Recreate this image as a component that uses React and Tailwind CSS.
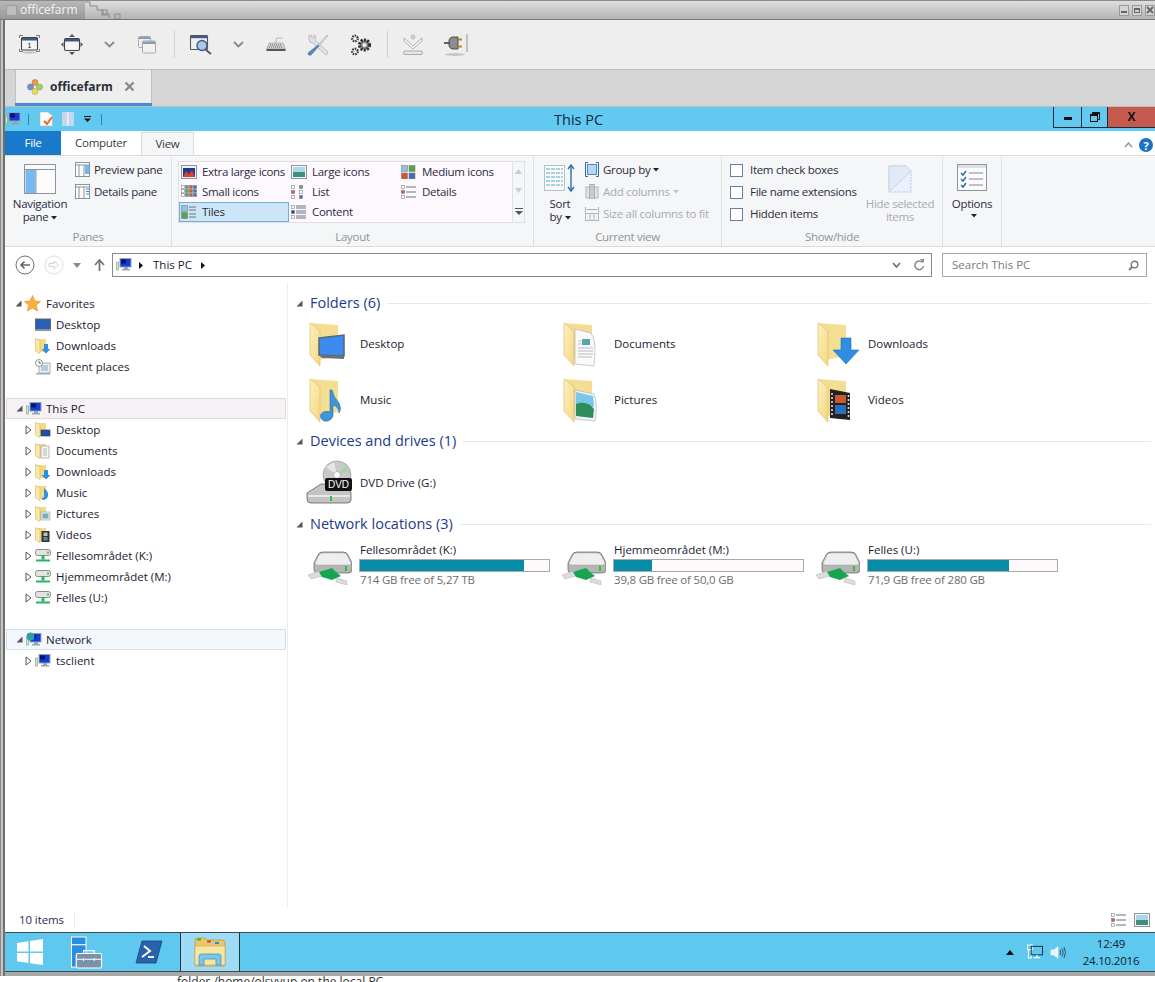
import React from "react";

const FONT = { fontFamily: '"Open Sans","Noto Sans",sans-serif' };

function FolderBig({ children, id }) {
  return (
    <svg width="48" height="48" viewBox="0 0 48 48" className="shrink-0">
      <defs>
        <linearGradient id={`leaf-${id}`} x1="0" y1="0" x2="1" y2="1">
          <stop offset="0" stopColor="#fdf1c2" />
          <stop offset="1" stopColor="#f5d77e" />
        </linearGradient>
      </defs>
      <path d="M4 3 L32 5 L32 36 L12 40Z" fill="#f4de93" />
      <path d="M4 3 L14 11 L14 46 L4 35Z" fill={`url(#leaf-${id})`} stroke="#dcc070" strokeWidth="0.7" />
      {children}
    </svg>
  );
}
function FolderSmall({ children }) {
  return (
    <svg width="16" height="16" viewBox="0 0 16 16" className="shrink-0">
      <path d="M1 1 L11 1 L11 14 L3 14Z" fill="#f3da86" />
      <path d="M0.5 0.5 L5 2.5 L5 15.5 L0.5 13Z" fill="#fbe9aa" stroke="#d5b65e" strokeWidth="0.6" />
      {children}
    </svg>
  );
}
function Monitor({ globe }) {
  return (
    <svg width="16" height="16" viewBox="0 0 16 16" className="shrink-0">
      <rect x="0.5" y="5" width="2" height="8" fill="#dcdcdc" stroke="#6fae6f" strokeWidth="0.6" />
      <rect x="4" y="1.5" width="11" height="8.5" fill="#0f3fd8" stroke="#9aa3ad" />
      <rect x="5" y="2.5" width="5" height="4" fill="#07156b" />
      <path d="M8 10 h4 v2 h2 v1.5 h-8 v-1.5 h2z" fill="#9aa3ad" />
      {globe && <circle cx="4.5" cy="4.5" r="4" fill="#2e9ad8" />}
      {globe && <path d="M2 3 L5 1.5 L7 4 L4 7Z" fill="#39a845" />}
    </svg>
  );
}
function NetDriveSmall() {
  return (
    <svg width="16" height="16" viewBox="0 0 16 16" className="shrink-0">
      <rect x="0.5" y="1.5" width="15" height="6" rx="2" fill="#e2e2e2" stroke="#8b8b8b" />
      <rect x="12" y="3.5" width="2" height="2" fill="#67b94a" />
      <rect x="6.5" y="7.5" width="3" height="4" fill="#26b36b" />
      <rect x="1" y="11.5" width="14" height="2" fill="#26b36b" />
    </svg>
  );
}
function NetDriveBig() {
  return (
    <svg width="44" height="34" viewBox="0 0 44 34" className="shrink-0">
      <path d="M6 12 L10 4 Q11 1 15 1 L35 1 Q39 1 40 4 L44 12 L44 19 Q44 22 40 22 L10 22 Q6 22 6 19Z" fill="#b5b5b5" stroke="#5f5f5f" strokeWidth="0.7" />
      <path d="M7 12 L11 4 Q12 2 15 2 L35 2 Q38 2 39 4 L43 12 Q43 14 40 14 L10 14 Q7 14 7 12Z" fill="#eeeeee" stroke="#999" strokeWidth="0.4" />
      <rect x="37" y="15" width="2" height="5" fill="#35c032" />
      <path d="M0 24 L11 20 L14 25 L3 28Z" fill="#dcdcdc" stroke="#a5a5a5" strokeWidth="0.4" />
      <path d="M11 21 L24 17 L28 21 L33 25 L24 29 L14 26Z" fill="#18a552" />
      <path d="M29 27 L39 30 L39 34 L28 31Z" fill="#dcdcdc" stroke="#a5a5a5" strokeWidth="0.4" />
    </svg>
  );
}
function DvdBig() {
  return (
    <svg width="48" height="48" viewBox="0 0 48 48" className="shrink-0">
      <circle cx="32" cy="16" r="14" fill="#c9c9c9" stroke="#8f8f8f" strokeWidth="0.6" />
      <path d="M21 8 L32 16 L29 3Z" fill="#e6e6e6" />
      <path d="M32 16 L43 12 L41 6Z" fill="#a6d6a0" />
      <circle cx="32" cy="16" r="3.5" fill="#fafafa" stroke="#888" strokeWidth="0.5" />
      <path d="M2 34 L16 25 L44 25 L46 34 L46 41 Q46 44 42 44 L6 44 Q2 44 2 40Z" fill="#c4c4c4" stroke="#5f5f5f" strokeWidth="0.8" />
      <path d="M3 37 H45" stroke="#f4f4f4" strokeWidth="1.5" />
      <rect x="25" y="37" width="2" height="5" fill="#38c038" />
      <rect x="20" y="19" width="27" height="13" rx="2" fill="#111" />
      <text x="33.5" y="29" textAnchor="middle" fontSize="10" fontFamily="Liberation Sans" fill="#fff">DVD</text>
    </svg>
  );
}

const overlays = {
  desktop: (
    <>
      <path d="M13 18 L38 15 L38 36 L13 35Z" fill="#3d8af0" stroke="#5a6670" strokeWidth="1.5" />
      <path d="M13 35 L38 36 L38 39 L16 38Z" fill="#677179" />
    </>
  ),
  documents: (
    <>
      <path d="M15 9 L31 13 Q37 20 34 46 L15 44Z" fill="#fafafa" stroke="#aeb6bd" strokeWidth="0.7" />
      <rect x="22" y="19" width="8" height="6" fill="#5fa5a8" />
      <path d="M18 21 H21 M18 24 H21 M18 28 H33 M18 31 H33 M18 34 H33 M18 37 H32" stroke="#b5bcc4" strokeWidth="1" />
    </>
  ),
  downloads: (
    <path d="M27 18 H37 V30 H45 L32 44 L19 30 H27Z" fill="#2f8ee0" stroke="#1e6fb8" strokeWidth="0.6" />
  ),
  music: (
    <path d="M24 14 L26 14 Q28 22 33 27 Q36 33 33 37 Q33 31 27 29 L27 40 Q25 46 18 45 Q13 42 15 38 Q18 34 24 36Z" fill="#3f95d8" stroke="#246fa8" strokeWidth="0.6" />
  ),
  pictures: (
    <>
      <path d="M15 14 L34 18 Q38 28 35 45 L15 43Z" fill="#eef4f5" stroke="#aeb6bd" strokeWidth="0.7" />
      <path d="M16 16 L33 20 L34 31 L16 29Z" fill="#7cc6e8" />
      <path d="M16 28 Q27 24 34 33 L33 42 L16 40Z" fill="#2f8d5c" />
    </>
  ),
  videos: (
    <>
      <path d="M16 13 L36 17 L36 44 L16 42Z" fill="#222" />
      <rect x="21" y="19" width="11" height="8" fill="#c85a2e" />
      <rect x="21" y="29" width="11" height="9" fill="#2a70b8" />
      <path d="M18 17 V41 M34.5 19 V42" stroke="#ddd" strokeWidth="1.6" strokeDasharray="2 2" />
    </>
  ),
};

const smallOverlay = {
  desktop: <rect x="6" y="8" width="9" height="6" fill="#1b4fa8" stroke="#444" strokeWidth="0.7" />,
  documents: <path d="M6 3 H14 V15 H6Z M8 6 H12 M8 8 H12 M8 10 H12 M8 12 H12" fill="#f6f6f6" stroke="#8b95a0" strokeWidth="0.6" />,
  downloads: <path d="M9 6 H13 V11 H15.5 L11 15.5 L6.5 11 H9Z" fill="#2f8ee0" />,
  music: <path d="M9 3 Q14 7 13 11 Q12 15 7 15 L7 13 Q10 13 9 10Z" fill="#2f8ee0" />,
  pictures: (
    <>
      <rect x="6" y="6" width="9" height="8" fill="#eee" stroke="#888" strokeWidth="0.5" />
      <rect x="7.5" y="7.5" width="6" height="5" fill="#6cb4b5" />
    </>
  ),
  videos: (
    <>
      <rect x="6.5" y="4" width="8" height="11" fill="#333" />
      <rect x="8.5" y="5.5" width="4" height="3.5" fill="#b9c7b0" />
      <rect x="8.5" y="10" width="4" height="3.5" fill="#5f88a8" />
    </>
  ),
};

function Tri({ open }) {
  return open ? (
    <svg width="7" height="7" viewBox="0 0 7 7" className="shrink-0">
      <path d="M6.5 0.5 V6.5 H0.5Z" fill="#555" />
    </svg>
  ) : (
    <svg width="7" height="10" viewBox="0 0 7 10" className="shrink-0">
      <path d="M1 1 L6 5 L1 9Z" fill="#fff" stroke="#555" />
    </svg>
  );
}

function NavHead({ icon, label, box }) {
  return (
    <div className={`ml-[1px] mr-[1px] flex h-[21px] items-center border pl-[9px] ${box}`}>
      <Tri open />
      <span className="ml-[2px] flex w-[18px] justify-center">{icon}</span>
      <span className="ml-[3px] text-[#1a1a30]">{label}</span>
    </div>
  );
}
function NavItem({ icon, label, arrow }) {
  return (
    <div className="flex h-[21px] items-center pl-[20px]">
      <span className="flex w-[10px]">{arrow && <Tri />}</span>
      {icon}
      <span className="ml-[5px] text-[#1a1a30]">{label}</span>
    </div>
  );
}

function Section({ label, className }) {
  return (
    <div className={`flex h-[20px] items-center ${className}`}>
      <Tri open />
      <span className="ml-[7px] text-[14.5px] text-[#1e3a8a]">{label}</span>
      <span className="ml-[7px] h-px flex-1 bg-[#dfe9f2]" />
    </div>
  );
}

function FolderTile({ id, label }) {
  return (
    <div className="flex h-[56px] items-center">
      <span className="ml-[7px] flex w-[54px]">
        <FolderBig id={id}>{overlays[id]}</FolderBig>
      </span>
      <span className="text-[#1a1a30]">{label}</span>
    </div>
  );
}

function DriveTile({ name, free, pct }) {
  return (
    <div className="flex h-[50px] items-center">
      <span className="ml-[9px] flex w-[52px] pt-[8px]">
        <NetDriveBig />
      </span>
      <div className="flex w-[190px] flex-col">
        <span className="h-[17px] leading-[16px] text-[#1a1a30]">{name}</span>
        <div className="-ml-px h-[13px] border border-[#a9a9a9] bg-[#fdf9fd]">
          <div className="h-full bg-[#078ba6]" style={{ width: `${pct}%` }} />
        </div>
        <span className="h-[15px] whitespace-nowrap leading-[16px] tracking-[-0.2px] text-[#6d6d6d]">{free}</span>
      </div>
    </div>
  );
}

function LayoutIcon({ kind }) {
  const grid = (cols, rows, sz, gap, fills) => {
    const out = [];
    let k = 0;
    for (let r = 0; r < rows; r++)
      for (let c = 0; c < cols; c++) {
        out.push(
          <rect key={k} x={0.5 + c * (sz + gap)} y={0.5 + r * (sz + gap)} width={sz} height={sz} fill={fills[k % fills.length]} stroke="#7b8590" strokeWidth="0.6" />
        );
        k++;
      }
    return out;
  };
  const lines = (ys, x1, x2) => ys.map((y) => <path key={y} d={`M${x1} ${y} H${x2}`} stroke="#69727e" strokeWidth="1" />);
  return (
    <svg width="16" height="14" viewBox="0 0 16 14" className="shrink-0">
      {kind === "xl" && (
        <>
          <rect x="0.5" y="0.5" width="15" height="13" fill="#eef2f6" stroke="#8d96a0" />
          <rect x="2" y="3" width="12" height="9" fill="#1e3a8a" />
          <path d="M2 12 L5 6 L8 9 L11 5 L14 12Z" fill="#d8432b" />
        </>
      )}
      {kind === "l" && (
        <>
          <rect x="0.5" y="0.5" width="15" height="13" fill="#f4f6f8" stroke="#8d96a0" />
          <rect x="2" y="2" width="12" height="5" fill="#a9d8e8" />
          <rect x="2" y="7" width="12" height="5" fill="#3f8f7a" />
        </>
      )}
      {kind === "m" && grid(2, 2, 6, 1.5, ["#8fc4d8", "#5da04c", "#d8542f", "#3e6fb0"])}
      {kind === "s" && grid(4, 3, 3, 1, ["#fff", "#5da04c", "#d8542f", "#3e6fb0"])}
      {kind === "list" && (
        <>
          {grid(1, 3, 3, 2, ["#fff", "#d8542f", "#fff"])}
          <g transform="translate(8 0)">{grid(1, 3, 3, 2, ["#5da04c", "#fff", "#3e6fb0"])}</g>
        </>
      )}
      {kind === "det" && (
        <>
          {grid(1, 3, 3, 2, ["#fff", "#d8542f", "#fff"])}
          {lines([2, 7, 12], 5, 15)}
        </>
      )}
      {kind === "tiles" && (
        <>
          {grid(1, 2, 6, 1, ["#8fc4d8", "#5da04c"])}
          {lines([2, 5, 9, 12], 8, 15)}
        </>
      )}
      {kind === "content" && (
        <>
          {grid(1, 3, 3, 2, ["#fff", "#27446e", "#fff"])}
          {lines([1, 3, 6, 8, 11, 13], 5, 15)}
        </>
      )}
    </svg>
  );
}

function LayoutCell({ kind, label, active }) {
  return (
    <div className={`flex h-[20px] items-center pl-[1px] ${active ? "border border-[#73add9] bg-[#cde6f7]" : "border border-transparent"}`}>
      <LayoutIcon kind={kind} />
      <span className="ml-[5px] whitespace-nowrap text-[#2b2b40]">{label}</span>
    </div>
  );
}

function Check({ label }) {
  return (
    <div className="flex h-[22px] items-center">
      <span className="h-[13px] w-[13px] border border-[#6a7ea8] bg-white" />
      <span className="ml-[7px] whitespace-nowrap text-[#2b2b40]">{label}</span>
    </div>
  );
}

function Caret({ color = "#222" }) {
  return (
    <svg width="6" height="4" viewBox="0 0 6 4" className="ml-[3px] inline-block align-middle">
      <path d="M0 0 H6 L3 3.5Z" fill={color} />
    </svg>
  );
}

function Group({ label, className, children }) {
  return (
    <div className={`flex h-full shrink-0 flex-col border-r border-[#dcdfe2] ${className}`}>
      <div className="min-h-0 flex-1">{children}</div>
      <div className="h-[17px] text-center text-[11.5px] leading-[15px] text-[#8e9499]">{label}</div>
    </div>
  );
}

const ToolIcons = {
  fullscreen: (
    <svg width="21" height="19" viewBox="0 0 21 19">
      <path d="M0.5 3 V0.5 H4 M17 0.5 H20.5 V3 M20.5 14 V16.5 H17 M4 16.5 H0.5 V14" fill="none" stroke="#777" strokeWidth="1" />
      <rect x="2.5" y="2.5" width="16" height="12.5" fill="#f4f4f4" stroke="#444" strokeWidth="1.1" rx="1" />
      <rect x="3" y="3" width="15" height="2.5" fill="#3e5c8a" />
      <text x="10.5" y="13" textAnchor="middle" fontSize="7" fontFamily="Liberation Sans" fill="#222">1</text>
      <ellipse cx="10.5" cy="17.5" rx="7" ry="1.2" fill="#c4c4c4" />
    </svg>
  ),
  resize: (
    <svg width="22" height="21" viewBox="0 0 22 21">
      <rect x="3.5" y="4.5" width="15" height="12" rx="1.5" fill="#f4f4f4" stroke="#444" strokeWidth="1.1" />
      <rect x="4" y="5" width="14" height="2.5" fill="#3e5c8a" />
      <path d="M11 0 L14 3 H8Z M11 21 L14 18 H8Z M0 10.5 L2.5 8 V13Z M22 10.5 L19.5 8 V13Z" fill="#555" />
    </svg>
  ),
  windows: (
    <svg width="18" height="18" viewBox="0 0 18 18">
      <rect x="0.5" y="0.5" width="12" height="11" rx="1" fill="#eee" stroke="#aaa" />
      <rect x="1" y="1" width="11" height="2" fill="#8a9bb8" />
      <rect x="4.5" y="5" width="13" height="12" rx="1" fill="#f2f2f2" stroke="#aaa" />
      <rect x="5" y="5.5" width="12" height="2.5" fill="#8a9bb8" />
    </svg>
  ),
  zoom: (
    <svg width="22" height="20" viewBox="0 0 22 20">
      <rect x="0.5" y="0.5" width="17" height="14" rx="1" fill="#f0f0f0" stroke="#555" strokeWidth="1.1" />
      <rect x="1" y="1" width="16" height="2.2" fill="#3e5c8a" />
      <circle cx="12" cy="10.5" r="5" fill="#a9c9ea" stroke="#3d5f8a" strokeWidth="1.4" />
      <path d="M15.5 14.5 L21 19" stroke="#555" strokeWidth="1.8" />
    </svg>
  ),
  keyboard: (
    <svg width="20" height="15" viewBox="0 0 20 15">
      <path d="M17 1 H12 Q9 1 10 3 Q11 5 9 5" fill="none" stroke="#aaa" strokeWidth="0.8" />
      <path d="M3 6 H17 L19.5 12 H0.5Z" fill="#cfcfcf" stroke="#8a8a8a" strokeWidth="0.5" />
      <path d="M4 8 H16 M3 10 H17" stroke="#666" strokeWidth="1" strokeDasharray="1 1" />
      <rect x="0.5" y="12" width="19" height="2" rx="0.5" fill="#555" />
    </svg>
  ),
  tools: (
    <svg width="22" height="22" viewBox="0 0 22 22">
      <path d="M2 3 Q1 1 4 1 L5 4 L7 3 L7 1 Q10 2 8 6 L20 17 Q22 20 19 21 L6 9 Q2 9 2 5Z" fill="#e2e2e2" stroke="#a8a8a8" strokeWidth="0.7" />
      <path d="M20 1 L21 2 L12 12 L11 11Z" fill="#d8d8d8" stroke="#ababab" strokeWidth="0.6" />
      <path d="M11 11 L12 12 L4 21 Q1 22 1 19Z" fill="#5b88bf" stroke="#3c669b" strokeWidth="0.6" />
    </svg>
  ),
  gears: (
    <svg width="22" height="22" viewBox="0 0 22 22">
      <circle cx="14.5" cy="11" r="5" fill="#8a8a8a" stroke="#333" strokeWidth="3.2" strokeDasharray="2 1.2" />
      <circle cx="14.5" cy="11" r="2" fill="#eee" />
      <circle cx="5" cy="4.5" r="2.8" fill="#eee" stroke="#333" strokeWidth="2.2" strokeDasharray="1.5 1" />
      <circle cx="5" cy="17.5" r="2.8" fill="#eee" stroke="#333" strokeWidth="2.2" strokeDasharray="1.5 1" />
    </svg>
  ),
  minimize: (
    <svg width="20" height="21" viewBox="0 0 20 21">
      <circle cx="10" cy="3" r="2" fill="#d9d9d9" stroke="#a0a0a0" strokeWidth="0.6" />
      <path d="M1 4 L10 12 L19 4 L19 7 L10 15 L1 7Z" fill="#f7f7f7" stroke="#a0a0a0" strokeWidth="0.8" />
      <rect x="0.5" y="17" width="19" height="3.5" rx="1.5" fill="#e6e6e6" stroke="#999" strokeWidth="0.8" />
    </svg>
  ),
  plug: (
    <svg width="24" height="24" viewBox="0 0 24 24">
      <path d="M0 10 H6" stroke="#333" strokeWidth="1.5" />
      <path d="M5 7 Q6 4 9 4 H14 V16 H9 Q6 16 5 13Z" fill="#8c8c8c" stroke="#333" strokeWidth="0.8" />
      <path d="M14 6.5 H18 M14 13.5 H18" stroke="#b58a12" strokeWidth="2.2" />
      <path d="M23 1 V19" stroke="#b5b5b5" strokeWidth="1.6" />
      <ellipse cx="11" cy="21.5" rx="10" ry="1.5" fill="#c4c4c4" />
    </svg>
  ),
};

function Chevron() {
  return (
    <svg width="11" height="7" viewBox="0 0 11 7">
      <path d="M1 1 L5.5 5.5 L10 1" fill="none" stroke="#8a8a8a" strokeWidth="1.8" />
    </svg>
  );
}

export default function App() {
  return (
    <div className="relative flex h-[982px] w-[1155px] flex-col overflow-hidden bg-white text-[11.5px]" style={FONT}>
      {/* outer app frame title */}
      <div className="flex h-[20px] shrink-0 items-stretch border-b border-t border-b-[#777777] border-t-[#8a8a8a] bg-gradient-to-b from-[#dedede] to-[#b4b4b4]">
        <div className="flex items-center bg-gradient-to-b from-[#b8b8b8] to-[#989898] pl-[6px] pr-[7px]">
          <span className="h-[11px] w-[11px] border border-[#9c9c9c] bg-[#bdbdbd]" />
          <span className="ml-[3px] text-[12px] text-[#f4f4f4]">officefarm</span>
        </div>
        <svg width="40" height="18" viewBox="0 0 40 18">
          <path d="M0 1 H5 V5 H12 V9 H18 V13 H24 V17" fill="none" stroke="#8a8a8a" strokeWidth="1" />
          <rect x="17" y="9" width="5" height="5" fill="none" stroke="#8a8a8a" />
          <rect x="30" y="13" width="5" height="5" fill="none" stroke="#8a8a8a" />
        </svg>
        <div className="ml-auto flex items-center gap-[3px]">
          <span className="flex h-[11px] w-[10px] items-end justify-center border border-[#9a9a9a] bg-[#d4d4d4] pb-[2px]">
            <span className="h-[2px] w-[6px] bg-[#666]" />
          </span>
          <span className="flex h-[11px] w-[10px] items-center justify-center border border-[#9a9a9a] bg-[#d4d4d4]">
            <span className="h-[5px] w-[6px] border border-t-2 border-[#666]" />
          </span>
          <span className="flex h-[11px] w-[10px] items-center justify-center border border-[#9a9a9a] bg-[#d4d4d4]">
            <svg width="8" height="8" viewBox="0 0 8 8"><path d="M1 1 L7 7 M7 1 L1 7" stroke="#666" strokeWidth="1.8" /></svg>
          </span>
        </div>
      </div>

      <div className="flex min-h-0 flex-1 flex-col bg-[linear-gradient(to_right,#8a8a8a_1px,#c4c4c4_1px,#c4c4c4_3px,#6f6f6f_3px,#6f6f6f_5px,#ffffff_5px)] pl-[5px]">
        {/* spice toolbar */}
        <div className="flex h-[50px] shrink-0 items-center border-b border-[#bdbdbd] bg-[#eeeeee] pl-[14px]">
          <span className="flex w-[42px]">{ToolIcons.fullscreen}</span>
          <span className="flex w-[43px]">{ToolIcons.resize}</span>
          <span className="flex w-[34px]"><Chevron /></span>
          <span className="flex w-[36px]">{ToolIcons.windows}</span>
          <span className="h-[27px] w-px bg-[#cfcfcf]" />
          <span className="ml-[15px] flex w-[43px]">{ToolIcons.zoom}</span>
          <span className="flex w-[33px]"><Chevron /></span>
          <span className="flex w-[41px]">{ToolIcons.keyboard}</span>
          <span className="flex w-[43px]">{ToolIcons.tools}</span>
          <span className="flex w-[37px]">{ToolIcons.gears}</span>
          <span className="h-[27px] w-px bg-[#cfcfcf]" />
          <span className="ml-[15px] flex w-[41px]">{ToolIcons.minimize}</span>
          {ToolIcons.plug}
        </div>

        {/* tab bar */}
        <div className="flex h-[37px] shrink-0 border-b border-[#bdbdbd] bg-[#d5d5d5]">
          <div className="ml-[10px] flex w-[137px] flex-col border-x border-[#c0c0c0] bg-[#eeeeee]">
            <div className="flex flex-1 items-center pl-[11px]">
              <svg width="16" height="16" viewBox="0 0 16 16">
                <circle cx="8" cy="3.5" r="3" fill="#ee9a4d" stroke="#a86a30" strokeWidth="0.5" />
                <circle cx="3.5" cy="8" r="3" fill="#6f93c8" stroke="#456a9c" strokeWidth="0.5" />
                <circle cx="12.5" cy="8" r="3" fill="#a2d35c" stroke="#6f9a3a" strokeWidth="0.5" />
                <circle cx="8" cy="12.5" r="3" fill="#f2d75c" stroke="#b89b30" strokeWidth="0.5" />
              </svg>
              <span className="ml-[7px] text-[12px] font-bold text-[#2b2f38]">officefarm</span>
              <svg width="11" height="11" viewBox="0 0 11 11" className="ml-[11px]">
                <path d="M1.5 1.5 L9.5 9.5 M9.5 1.5 L1.5 9.5" stroke="#8a8a8a" strokeWidth="2.4" />
              </svg>
            </div>
            <div className="-mx-px h-[3px] bg-[#4a88d4]" />
          </div>
        </div>

        {/* windows title bar */}
        <div className="relative flex h-[24px] shrink-0 items-center bg-[#62caf1]">
          <Monitor />
          <span className="ml-[7px] h-[11px] w-px bg-[#3d7f9e]" />
          <svg width="15" height="16" viewBox="0 0 15 16" className="ml-[10px]">
            <path d="M1 1 H9 L13.5 5 V15 H1Z" fill="#fbfbfb" stroke="#aaa" strokeWidth="0.5" />
            <path d="M5 10 L8 13 L13 6" fill="none" stroke="#e8672e" strokeWidth="2" />
          </svg>
          <svg width="12" height="16" viewBox="0 0 12 16" className="ml-[8px]">
            <rect x="0" y="1" width="12" height="14" fill="#c6d5ec" />
            <rect x="5" y="1" width="1.5" height="14" fill="#eaf1f9" />
          </svg>
          <svg width="7" height="6" viewBox="0 0 7 6" className="ml-[10px]">
            <rect x="0" y="0" width="7" height="1" fill="#111" />
            <path d="M0 2.5 H7 L3.5 6Z" fill="#111" />
          </svg>
          <span className="ml-[10px] h-[11px] w-px bg-[#3d7f9e]" />
          <span className="absolute left-[549px] top-[2px] text-[14.5px] text-[#10283a]">This PC</span>
          <div className="absolute right-0 top-0 flex h-[21px] border-b border-l border-[#1c2a36]">
            <span className="flex w-[28px] items-center justify-center border-r border-[#1c2a36]">
              <span className="mt-[3px] h-[3px] w-[8px] bg-[#111]" />
            </span>
            <span className="flex w-[26px] items-center justify-center border-r border-[#1c2a36]">
              <span className="relative block h-[10px] w-[10px]">
                <span className="absolute right-0 top-0 h-[8px] w-[8px] border border-t-2 border-[#111]" />
                <span className="absolute bottom-0 left-0 h-[8px] w-[8px] border border-t-2 border-[#111] bg-[#62caf1]" />
              </span>
            </span>
            <span className="flex w-[47px] items-center justify-center bg-[#c75a50] text-[12px] font-bold leading-none text-[#111]">X</span>
          </div>
        </div>

        {/* ribbon tabs */}
        <div className="flex h-[24px] shrink-0 items-end bg-white tracking-[-0.3px]">
          <div className="flex h-[24px] w-[56px] items-center justify-center bg-[#1979ca] text-white">File</div>
          <div className="flex h-[24px] w-[80px] items-center justify-center text-[#3b3b3b]">Computer</div>
          <div className="flex h-[23px] w-[53px] items-center justify-center border-x border-t border-[#dadbdc] bg-[#f5f6f7] text-[#3b3b3b]">View</div>
          <div className="ml-auto mb-[3px] mr-[2px] flex items-center gap-[6px]">
            <svg width="9" height="6" viewBox="0 0 9 6"><path d="M1 5 L4.5 1 L8 5" fill="none" stroke="#999" strokeWidth="1.5" /></svg>
            <span className="flex h-[14px] w-[14px] items-center justify-center rounded-full bg-[#1a73c9] text-[11px] font-bold leading-none text-white">?</span>
          </div>
        </div>

        {/* ribbon */}
        <div className="flex h-[92px] shrink-0 items-stretch border-b border-t border-[#dadbdc] bg-[#f5f6f7] pt-[1px] tracking-[-0.3px]">
          <Group label="Panes" className="w-[167px]">
            <div className="flex h-full">
              <div className="flex w-[70px] flex-col items-center pt-[7px]">
                <svg width="32" height="30" viewBox="0 0 32 30">
                  <rect x="0.5" y="0.5" width="31" height="29" fill="#fcfcfc" stroke="#8b95a0" />
                  <rect x="1" y="5" width="30" height="1" fill="#8b95a0" />
                  <rect x="1.5" y="6" width="10" height="23" fill="#75b9f0" />
                  <path d="M12 6 V29" stroke="#8b95a0" />
                </svg>
                <div className="mt-[3px] whitespace-nowrap text-center leading-[13px] text-[#2b2b40]">
                  Navigation
                  <br />
                  pane<Caret />
                </div>
              </div>
              <div className="flex flex-col gap-px pt-[2px]">
                {[
                  ["Preview pane", <rect key="a" x="10" y="3" width="4" height="9" fill="#75b9f0" />],
                  ["Details pane", <path key="b" d="M11 5 H14 M11 7.5 H14 M11 10 H14" stroke="#4a88d4" strokeWidth="1.2" />],
                ].map(([t, extra]) => (
                  <div key={t} className="flex h-[21px] items-center">
                    <svg width="15" height="15" viewBox="0 0 15 15">
                      <rect x="0.5" y="0.5" width="14" height="14" fill="#fcfcfc" stroke="#8b95a0" />
                      <path d="M1 3 H14 M4 3 V14 M9 3 V14" stroke="#8b95a0" fill="none" />
                      {extra}
                    </svg>
                    <span className="ml-[4px] whitespace-nowrap text-[#2b2b40]">{t}</span>
                  </div>
                ))}
              </div>
            </div>
          </Group>

          <Group label="Layout" className="w-[362px]">
            <div className="ml-[6px] mt-[4px] flex h-[62px] w-[347px] border border-[#dfe1e4]">
              <div className="grid w-[333px] grid-cols-[110px_110px_auto] grid-rows-[20px_20px_20px] bg-[#fdf8fd]">
                <LayoutCell kind="xl" label="Extra large icons" />
                <LayoutCell kind="l" label="Large icons" />
                <LayoutCell kind="m" label="Medium icons" />
                <LayoutCell kind="s" label="Small icons" />
                <LayoutCell kind="list" label="List" />
                <LayoutCell kind="det" label="Details" />
                <LayoutCell kind="tiles" label="Tiles" active />
                <LayoutCell kind="content" label="Content" />
              </div>
              <div className="flex flex-1 flex-col items-center justify-around border-l border-[#dfe1e4]">
                <svg width="7" height="5" viewBox="0 0 7 5"><path d="M0 5 L3.5 0 L7 5Z" fill="#c9ccd0" /></svg>
                <svg width="7" height="5" viewBox="0 0 7 5"><path d="M0 0 L3.5 5 L7 0Z" fill="#c9ccd0" /></svg>
                <svg width="8" height="7" viewBox="0 0 8 7"><path d="M0 0 H8 V1 H0Z M0 3 H8 L4 7Z" fill="#555" /></svg>
              </div>
            </div>
          </Group>

          <Group label="Current view" className="w-[188px]">
            <div className="flex h-full pl-[8px] pt-[7px]">
              <div className="flex w-[36px] flex-col items-center">
                <svg width="32" height="30" viewBox="0 0 32 30" className="shrink-0">
                  <rect x="0.5" y="1.5" width="20" height="25" fill="#fbfbfb" stroke="#b8bec6" />
                  <path d="M2 5 H19 M2 9 H19 M2 13 H19 M2 17 H19 M2 21 H19" stroke="#8cc4dc" strokeWidth="1.5" strokeDasharray="4 1" />
                  <path d="M27 1 V27" stroke="#2a6fa8" strokeWidth="1.4" />
                  <path d="M24 5 L27 1 L30 5 M24 23 L27 27 L30 23" fill="none" stroke="#2a6fa8" strokeWidth="1.4" />
                </svg>
                <div className="mt-[3px] text-center leading-[13px] text-[#2b2b40]">
                  Sort
                  <br />
                  by<Caret />
                </div>
              </div>
              <div className="ml-[7px] mt-[-5px] flex flex-col gap-px">
                <div className="flex h-[21px] items-center">
                  <svg width="14" height="15" viewBox="0 0 14 15">
                    <path d="M3 0.5 H0.5 V14.5 H3 M11 0.5 H13.5 V14.5 H11" fill="none" stroke="#2a6fa8" />
                    <rect x="2.5" y="2.5" width="9" height="10" fill="#b8d8f2" stroke="#4a88d4" />
                  </svg>
                  <span className="ml-[4px] whitespace-nowrap text-[#2b2b40]">Group by</span>
                  <Caret />
                </div>
                <div className="flex h-[21px] items-center text-[#a7abb0]">
                  <svg width="14" height="15" viewBox="0 0 14 15">
                    <rect x="1" y="3" width="12" height="11" fill="#e1e4e8" stroke="#b0b6bd" />
                    <rect x="4.5" y="2" width="5" height="13" fill="#c5ccd4" stroke="#a7adb5" />
                    <path d="M4 0.5 H10" stroke="#a7adb5" />
                  </svg>
                  <span className="ml-[4px] whitespace-nowrap">Add columns</span>
                  <Caret color="#c0c3c7" />
                </div>
                <div className="flex h-[21px] items-center text-[#a7abb0]">
                  <svg width="14" height="15" viewBox="0 0 14 15">
                    <path d="M0.5 1 V6 M13.5 1 V6 M2 3.5 H12" stroke="#a7adb5" />
                    <rect x="0.5" y="7.5" width="13" height="7" fill="#f2f3f4" stroke="#b0b6bd" />
                    <path d="M5 8 V14 M9 8 V14" stroke="#b0b6bd" />
                  </svg>
                  <span className="ml-[4px] whitespace-nowrap">Size all columns to fit</span>
                </div>
              </div>
            </div>
          </Group>

          <Group label="Show/hide" className="w-[221px]">
            <div className="flex h-full pl-[8px] pt-[2px]">
              <div className="flex w-[127px] shrink-0 flex-col">
                <Check label="Item check boxes" />
                <Check label="File name extensions" />
                <Check label="Hidden items" />
              </div>
              <div className="ml-[8px] flex w-[70px] shrink-0 flex-col items-center pt-[6px] text-[#a7abb0]">
                <svg width="24" height="28" viewBox="0 0 24 28" className="shrink-0">
                  <path d="M1 1 H18 L23 6 V27 H1Z" fill="#ebf2fb" stroke="#b9c8dc" strokeDasharray="2 1" />
                  <path d="M1 27 L1 1 H18 L23 6 Z" fill="#e1ebf8" stroke="#c7d4e6" />
                </svg>
                <div className="mt-[4px] whitespace-nowrap text-center leading-[13px]">
                  Hide selected
                  <br />
                  items
                </div>
              </div>
            </div>
          </Group>

          <Group label="" className="w-[59px]">
            <div className="flex flex-col items-center pt-[7px]">
              <svg width="30" height="27" viewBox="0 0 30 27" className="shrink-0">
                <rect x="0.5" y="0.5" width="29" height="26" fill="#fbfbfb" stroke="#8b95a0" />
                <rect x="1" y="1" width="28" height="3" fill="#dde1e6" />
                <path d="M4 9 L6 11 L9 7 M4 15 L6 17 L9 13 M4 21 L6 23 L9 19" fill="none" stroke="#2a6fa8" strokeWidth="1.5" />
                <path d="M12 9 H26 M12 15 H26 M12 21 H26" stroke="#8a7f9e" />
              </svg>
              <div className="mt-[5px] leading-[15px] text-[#2b2b40]">Options</div>
              <div className="mt-[3px] flex leading-none"><Caret /></div>
            </div>
          </Group>
        </div>

        {/* address bar */}
        <div className="flex h-[36px] shrink-0 items-center bg-white pl-[10px]">
          <svg width="20" height="20" viewBox="0 0 20 20">
            <circle cx="10" cy="10" r="9" fill="#fff" stroke="#6e6e6e" />
            <path d="M15 10 H6 M9.5 6.5 L6 10 L9.5 13.5" fill="none" stroke="#666" strokeWidth="1.6" />
          </svg>
          <svg width="20" height="20" viewBox="0 0 20 20" className="ml-[9px]">
            <circle cx="10" cy="10" r="9" fill="#fff" stroke="#dedede" />
            <path d="M5 8.5 H10 V6 L14.5 10 L10 14 V11.5 H5Z" fill="none" stroke="#d2d2d2" />
          </svg>
          <svg width="8" height="5" viewBox="0 0 8 5" className="ml-[9px]"><path d="M0 0 H8 L4 5Z" fill="#8a8a8a" /></svg>
          <svg width="11" height="12" viewBox="0 0 11 12" className="ml-[13px]">
            <path d="M5.5 12 V2 M1 6 L5.5 1 L10 6" fill="none" stroke="#777" strokeWidth="1.8" />
          </svg>
          <div className="ml-[7px] flex h-[24px] w-[820px] items-center border border-[#8a8a8a] pl-[3px]">
            <Monitor />
            <svg width="4" height="7" viewBox="0 0 4 7" className="ml-[7px]"><path d="M0 0 L4 3.5 L0 7Z" fill="#111" /></svg>
            <span className="ml-[10px] text-[#1a1a30]">This PC</span>
            <svg width="4" height="7" viewBox="0 0 4 7" className="ml-[9px]"><path d="M0 0 L4 3.5 L0 7Z" fill="#111" /></svg>
            <svg width="9" height="6" viewBox="0 0 9 6" className="ml-auto"><path d="M1 1 L4.5 5 L8 1" fill="none" stroke="#666" strokeWidth="1.5" /></svg>
            <svg width="11" height="12" viewBox="0 0 11 12" className="ml-[13px] mr-[6px]">
              <path d="M8.5 3.5 A4.3 4.3 0 1 0 9.5 7" fill="none" stroke="#888" strokeWidth="1.5" />
              <path d="M6 0 L10 0 L10 4Z" fill="#888" />
            </svg>
          </div>
          <div className="ml-[10px] flex h-[24px] w-[205px] items-center border border-[#a8a8a8] pl-[9px] text-[#7b7b7b]">
            Search This PC
            <svg width="11" height="11" viewBox="0 0 11 11" className="ml-auto mr-[7px]">
              <circle cx="6.5" cy="4.5" r="3.3" fill="none" stroke="#777" strokeWidth="1.4" />
              <path d="M4 7 L1 10" stroke="#777" strokeWidth="1.8" />
            </svg>
          </div>
        </div>

        {/* body */}
        <div className="flex min-h-0 flex-1 bg-white">
          <div className="w-[283px] shrink-0 border-r border-[#eeeeee] pt-[10px]">
            <div className="flex h-[21px] items-center pl-[10px]">
              <Tri open />
              <svg width="17" height="17" viewBox="0 0 17 17" className="ml-[2px]">
                <path d="M8.5 0.5 L11 6 L16.5 6.5 L12.3 10.2 L13.6 16 L8.5 13 L3.4 16 L4.7 10.2 L0.5 6.5 L6 6Z" fill="#fbb03b" stroke="#e8862a" strokeWidth="0.6" />
              </svg>
              <span className="ml-[5px] text-[#1a1a30]">Favorites</span>
            </div>
            <NavItem
              label="Desktop"
              icon={
                <svg width="16" height="16" viewBox="0 0 16 16" className="shrink-0">
                  <rect x="0.5" y="2" width="15" height="11" fill="#2a5fb8" stroke="#5f6a75" />
                  <rect x="0" y="12" width="16" height="2" fill="#8b95a0" />
                </svg>
              }
            />
            <NavItem label="Downloads" icon={<FolderSmall>{smallOverlay.downloads}</FolderSmall>} />
            <NavItem
              label="Recent places"
              icon={
                <svg width="16" height="16" viewBox="0 0 16 16" className="shrink-0">
                  <rect x="4" y="4" width="11" height="10" fill="#f2f2f2" stroke="#8b8b8b" strokeWidth="0.7" />
                  <path d="M6 7 H13 M6 9 H13 M6 11 H13" stroke="#7aa6c8" />
                  <circle cx="4" cy="4" r="3.5" fill="#fff" stroke="#777" strokeWidth="0.8" />
                  <path d="M4 2 V4 H6" stroke="#333" fill="none" strokeWidth="0.7" />
                  <path d="M1 14 H15 V15.5 H1Z" fill="#aaa" />
                </svg>
              }
            />
            <div className="h-[21px]" />
            <NavHead icon={<Monitor />} label="This PC" box="border-[#dedada] bg-[#f6f1f5]" />
            {["desktop:Desktop", "documents:Documents", "downloads:Downloads", "music:Music", "pictures:Pictures", "videos:Videos"].map((s) => {
              const [id, label] = s.split(":");
              return <NavItem key={id} arrow label={label} icon={<FolderSmall>{smallOverlay[id]}</FolderSmall>} />;
            })}
            {["Fellesområdet (K:)", "Hjemmeområdet (M:)", "Felles (U:)"].map((l) => (
              <NavItem key={l} arrow label={l} icon={<NetDriveSmall />} />
            ))}
            <div className="h-[21px]" />
            <NavHead icon={<Monitor globe />} label="Network" box="border-[#cfe0f2] bg-[#f3f8fd]" />
            <NavItem arrow label="tsclient" icon={<Monitor />} />
          </div>

          <div className="min-w-0 flex-1 pl-[8px] pr-[4px] pt-[10px]">
            <Section label="Folders (6)" />
            <div className="ml-[3px] mt-[3px] grid grid-cols-[254px_254px_254px]">
              <FolderTile id="desktop" label="Desktop" />
              <FolderTile id="documents" label="Documents" />
              <FolderTile id="downloads" label="Downloads" />
              <FolderTile id="music" label="Music" />
              <FolderTile id="pictures" label="Pictures" />
              <FolderTile id="videos" label="Videos" />
            </div>
            <Section label="Devices and drives (1)" className="mt-[3px]" />
            <div className="ml-[3px] flex h-[63px] items-center">
              <span className="ml-[6px] flex w-[55px]"><DvdBig /></span>
              <span className="text-[#1a1a30]">DVD Drive (G:)</span>
            </div>
            <Section label="Network locations (3)" />
            <div className="ml-[3px] mt-[5px] grid grid-cols-[254px_254px_254px]">
              <DriveTile name="Fellesområdet (K:)" free="714 GB free of 5,27 TB" pct={87} />
              <DriveTile name="Hjemmeområdet (M:)" free="39,8 GB free of 50,0 GB" pct={20} />
              <DriveTile name="Felles (U:)" free="71,9 GB free of 280 GB" pct={74.5} />
            </div>
          </div>
        </div>

        {/* status bar */}
        <div className="flex h-[24px] shrink-0 items-center bg-white pl-[14px] pr-[5px] tracking-[-0.1px] text-[#2d2d5a]">
          10 items
          <span className="ml-[10px] h-[16px] w-px bg-[#eeeeee]" />
          <div className="ml-auto flex items-center gap-[7px]">
            <LayoutIcon kind="det" />
            <LayoutIcon kind="l" />
          </div>
        </div>

        {/* taskbar */}
        <div className="flex h-[40px] shrink-0 items-stretch border-b border-t border-[#3c4a52] bg-[#5fc8ef]">
          <div className="flex w-[50px] items-center justify-center">
            <svg width="28" height="28" viewBox="0 0 28 28">
              <path d="M1 5 L12.5 3.3 V13.5 H1Z M14 3 L27 1 V13.5 H14Z M1 15 H12.5 V25 L1 23.3Z M14 15 H27 V27 L14 25.2Z" fill="#fff" />
            </svg>
          </div>
          <div className="flex w-[62px] items-center justify-center">
            <svg width="33" height="33" viewBox="0 0 34 34">
              <rect x="1.5" y="1" width="15" height="31" fill="#2a8ee0" stroke="#fff" strokeWidth="1" />
              <path d="M1.5 9 H16.5" stroke="#fff" strokeWidth="1.2" />
              <rect x="6.5" y="18" width="26" height="15" rx="1.5" fill="#7a93a8" stroke="#fff" strokeWidth="1.2" />
              <path d="M14 18 V15 H25 V18" fill="none" stroke="#fff" strokeWidth="1.2" />
              <path d="M6.5 24 H32.5 M14 23 V26 M25 23 V26" stroke="#fff" strokeWidth="1" />
            </svg>
          </div>
          <div className="flex w-[63px] items-center justify-center">
            <svg width="28" height="24" viewBox="0 0 28 24">
              <path d="M7 1 H27 L21 23 H1Z" fill="#2a62ac" stroke="#14447e" strokeWidth="0.8" />
              <path d="M9 6 L15 11 L7 17" fill="none" stroke="#fff" strokeWidth="2" />
              <path d="M13 17 H19" stroke="#fff" strokeWidth="1.8" />
            </svg>
          </div>
          <div className="flex w-[60px] items-center justify-center border-x border-[#26343c] bg-[#9edcf6]">
            <svg width="32" height="30" viewBox="0 0 32 30">
              <path d="M1 3 Q1 1 3 1 H11 L13 3 H28 Q31 3 31 6 V28 Q31 29 30 29 H2 Q1 29 1 28Z" fill="#e9c76f" stroke="#b8974a" strokeWidth="0.8" />
              <rect x="3" y="1.5" width="4" height="2" fill="#2eb82e" />
              <rect x="13" y="3.5" width="4" height="2" fill="#d8402a" />
              <rect x="21" y="5" width="4" height="2" fill="#1f8ee0" />
              <path d="M1 9 H31 V28 H1Z" fill="#f8e6a0" stroke="#c8a958" strokeWidth="0.6" />
              <path d="M5 28 V19 Q5 17 8 17 H24 Q27 17 27 19 V28 H22 V22 H10 V28Z" fill="#7cc6ec" stroke="#3d97c8" strokeWidth="0.8" />
            </svg>
          </div>
          <div className="ml-auto flex items-center pr-[17px]">
            <svg width="8" height="5" viewBox="0 0 8 5"><path d="M0 5 L4 0 L8 5Z" fill="#111" /></svg>
            <svg width="16" height="16" viewBox="0 0 17 16" className="ml-[13px]">
              <rect x="0.5" y="0.5" width="5" height="5" fill="none" stroke="#fff" />
              <rect x="1.5" y="5.5" width="3" height="9" fill="none" stroke="#fff" />
              <rect x="4.5" y="2" width="12" height="9" fill="none" stroke="#1c2a36" />
              <path d="M10.5 11 V13.5 M7 14 H14" stroke="#fff" strokeWidth="1.2" />
            </svg>
            <svg width="16" height="15" viewBox="0 0 16 15" className="ml-[7px]">
              <path d="M1 5 H4 L8 1.5 V13.5 L4 10 H1Z" fill="#e8f4fa" stroke="#fff" strokeWidth="0.6" />
              <path d="M10 5 Q11.5 7.5 10 10 M12 3.5 Q14.5 7.5 12 11.5 M14 2 Q17 7.5 14 13" fill="none" stroke="#28445a" strokeWidth="0.9" />
            </svg>
            <div className="ml-[18px] flex w-[54px] flex-col items-center whitespace-nowrap text-[11.5px] leading-[17px] tracking-[-0.2px] text-[#10222e]">
              <span>12:49</span>
              <span>24.10.2016</span>
            </div>
          </div>
        </div>

        {/* lower frame */}
        <div className="h-[4px] shrink-0 bg-[#a9a9a9]" />
      </div>
      <div className="relative h-[6px] shrink-0 overflow-hidden bg-white">
        <span className="absolute left-[177px] top-[-1px] whitespace-nowrap text-[12px] leading-[14px] text-[#333]">folder /home/olsyvup on the local PC</span>
      </div>
    </div>
  );
}
